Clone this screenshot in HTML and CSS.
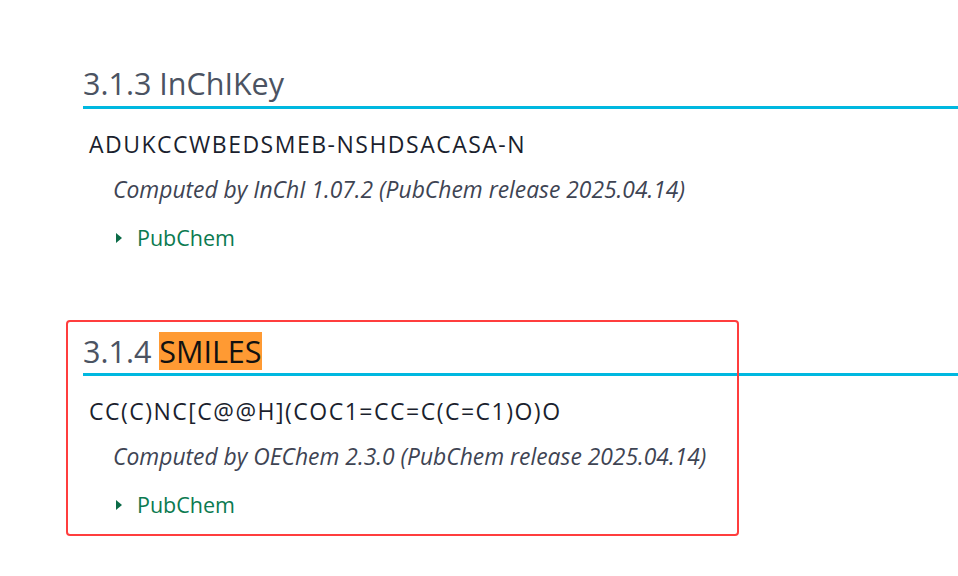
FILE: index.html
```html
<!DOCTYPE html>
<html>
<head>
<meta charset="utf-8">
<link rel="stylesheet" href="styles.css">
</head>
<body>
<main class="page">
  <section class="sec">
    <h2 class="sec-title">3.1.3 InChIKey</h2>
    <div class="value">ADUKCCWBEDSMEB-NSHDSACASA-N</div>
    <div class="note">Computed by InChI 1.07.2 (PubChem release 2025.04.14)</div>
    <div class="ref"><span class="tri"></span><span class="ref-link">PubChem</span></div>
  </section>
  <section class="sec sec-marked">
    <div class="mark-box"></div>
    <h2 class="sec-title">3.1.4 <span class="hl">SMILES</span></h2>
    <div class="value">CC(C)NC[C@@H](COC1=CC=C(C=C1)O)O</div>
    <div class="note">Computed by OEChem 2.3.0 (PubChem release 2025.04.14)</div>
    <div class="ref"><span class="tri"></span><span class="ref-link">PubChem</span></div>
  </section>
</main>
</body>
</html>
```
FILE: styles.css
```css
html, body {
  margin: 0;
  padding: 0;
  background: #ffffff;
}
body {
  font-family: "Open Sans", "Noto Sans", sans-serif;
  width: 958px;
  height: 576px;
  overflow: hidden;
}
.page {
  padding: 65px 0 0 83px;
  display: flex;
  flex-direction: column;
  gap: 79px;
}
.sec {
  position: relative;
  display: flex;
  flex-direction: column;
}
.sec-title {
  margin: 0;
  font-weight: 400;
  font-size: 30.5px;
  line-height: 36px;
  height: 36px;
  color: #4b5362;
  padding-bottom: 5px;
  border-bottom: 3px solid #00b8e0;
}
.hl {
  display: inline-block;
  line-height: 38px;
  height: 38px;
  background: #ff9a33;
  color: #111111;
}
.value {
  margin: 20px 0 0 6px;
  font-size: 23px;
  line-height: 30px;
  letter-spacing: 1.5px;
  color: #1b1f2e;
}
.note {
  margin: 16px 0 0 30px;
  font-size: 22.85px;
  line-height: 30px;
  font-style: italic;
  color: #3e4453;
}
.ref {
  margin: 18px 0 0 33px;
  display: flex;
  align-items: center;
  gap: 15px;
  font-size: 21.5px;
  line-height: 30px;
}
.tri {
  width: 0;
  height: 0;
  border-top: 5.5px solid transparent;
  border-bottom: 5.5px solid transparent;
  border-left: 6px solid #0b6b47;
}
.ref-link {
  color: #0b7a50;
}
.mark-box {
  position: absolute;
  left: -17px;
  top: -12px;
  width: 669px;
  height: 212px;
  border: 2px solid #ff3d3d;
  border-radius: 4px;
  pointer-events: none;
}
```
